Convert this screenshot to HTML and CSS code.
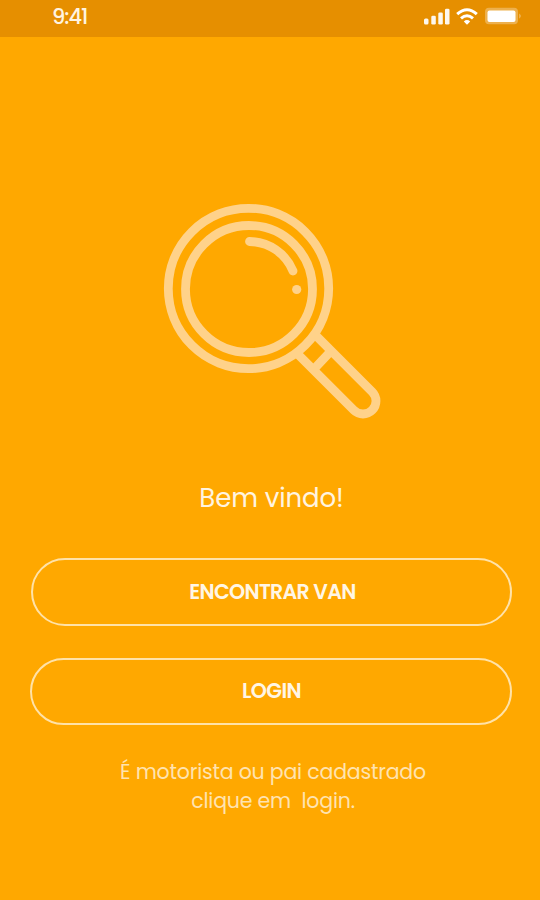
FILE: index.html
```
<!DOCTYPE html>
<html lang="pt-BR">
<head>
<meta charset="utf-8">
<title>Bem vindo</title>
<link rel="stylesheet" href="styles.css">
</head>
<body>
<header class="status">
  <span class="time">9:41</span>
  <svg class="indicators" width="98" height="20" viewBox="0 0 98 20" fill="#fff">
    <g opacity=".93">
      <rect x="2" y="12.500" width="4.500" height="6" rx="1.500"/>
      <rect x="9.300" y="9.800" width="4.500" height="8.700" rx="1.300"/>
      <rect x="16.300" y="6.500" width="4.500" height="12" rx="1.300"/>
      <rect x="23" y="2.700" width="4.500" height="15.800" rx="1.300"/>
    </g>
    <g fill="none" stroke="#fff" stroke-width="3">
      <path d="M35.200 8.200Q45 -.8 54.800 8.200"/>
      <path d="M39 12.400Q45 7.100 51 12.400"/>
    </g>
    <path d="M41.800 15.400Q45 12.800 48.200 15.400L45 18.800Z"/>
    <rect x="63" y="1.800" width="33" height="16.500" rx="4" opacity=".3"/>
    <path d="M97 7.500Q101 10 97 12.700Z" opacity=".3"/>
    <rect x="65.500" y="4.500" width="28" height="11.500" rx="2"/>
  </svg>
</header>
<main class="welcome">
  <svg class="magnifier" width="220" height="218" viewBox="162 202 220 218" fill="none" stroke="#ffd28a" stroke-width="8.800">
    <circle cx="248.500" cy="288.500" r="80.200"/>
    <circle cx="249" cy="289" r="63.500"/>
    <path d="M249.500 241.500A47.500 47.500 0 0 1 293 271" stroke-linecap="round"/>
    <circle cx="296.700" cy="289.500" r="4.600" fill="#ffd28a" stroke="none"/>
    <path d="M315 334.600L372.200 391.800A13 13 0 0 1 353.800 410.200L297.500 353.900M331 351L314.500 368.500"/>
  </svg>
  <h1 class="title">Bem vindo!</h1>
  <div class="actions">
    <button class="pill find">ENCONTRAR VAN</button>
    <button class="pill login">LOGIN</button>
  </div>
  <p class="hint">É motorista ou pai cadastrado<br>clique em&nbsp; login.</p>
</main>
</body>
</html>
```
FILE: styles.css
```
* { box-sizing: border-box; }
body {
  margin: 0;
  height: 900px;
  overflow: hidden;
  background: #ffa800;
  color: #fff4e0;
  font-family: Poppins, Inter, sans-serif;
}
.status {
  height: 37px;
  padding: 0 20px 0 52px;
  display: flex;
  justify-content: space-between;
  align-items: flex-start;
  background: #e68f00;
}
.time {
  padding-top: 5px;
  font-size: 21px;
  line-height: 24px;
  font-weight: 500;
  letter-spacing: -1px;
}
.indicators { margin-top: 6px; overflow: visible; }
.welcome {
  display: flex;
  flex-direction: column;
  align-items: center;
  padding-top: 165px;
}
.magnifier { flex: none; margin-left: 4px; }
.title {
  margin: 60px 0 0 3px;
  font-size: 26px;
  line-height: 36px;
  font-weight: 400;
  letter-spacing: -.1px;
  white-space: nowrap;
}
.actions {
  width: 482px;
  margin: 42px 0 0 1px;
  display: flex;
  flex-direction: column;
  gap: 32px;
}
.pill {
  height: 68px;
  padding: 0 0 0 2px;
  border: 2px solid #ffe2a8;
  border-radius: 34px;
  background: transparent;
  color: #fff6e5;
  font: 600 20.500px/24px Poppins, Inter, sans-serif;
  letter-spacing: -.65px;
}
.find { margin-left: 1px; padding-left: 3px; }
.login { height: 67px; padding-bottom: 2px; }
.hint {
  margin: 32px 0 0 6px;
  font-size: 20.500px;
  line-height: 29px;
  letter-spacing: -.2px;
  text-align: center;
  white-space: nowrap;
  color: #ffe3b0;
}
```
